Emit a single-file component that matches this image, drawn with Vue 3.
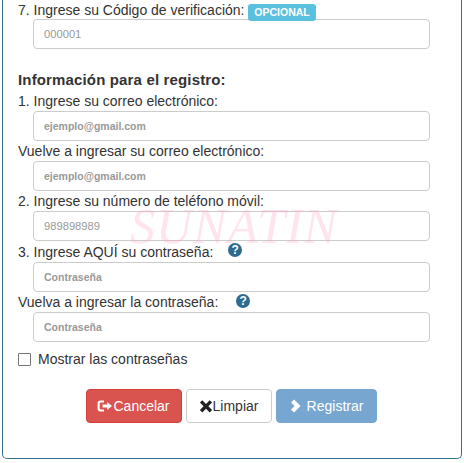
<script setup>
const groups = [
  { label: '1. Ingrese su correo electrónico:', placeholder: 'ejemplo@gmail.com', strong: true },
  { label: 'Vuelve a ingresar su correo electrónico:', placeholder: 'ejemplo@gmail.com', strong: true },
  { label: '2. Ingrese su número de teléfono móvil:', placeholder: '989898989' },
  { label: '3. Ingrese AQUÍ su contraseña:', placeholder: 'Contraseña', strong: true, help: true, mod: 'pass-a' },
  { label: 'Vuelva a ingresar la contraseña:', placeholder: 'Contraseña', strong: true, help: true, mod: 'pass-b' }
]
</script>

<template>
  <div class="panel">
    <div class="watermark">SUNATIN</div>
    <div class="group first">
      <div class="label">7. Ingrese su Código de verificación: <span class="badge">OPCIONAL</span></div>
      <input class="field" placeholder="000001" />
    </div>
    <h4 class="heading">Información para el registro:</h4>
    <div v-for="g in groups" :key="g.label" class="group" :class="g.mod">
      <div class="label">
        {{ g.label }}
        <span v-if="g.help" class="help">?</span>
      </div>
      <input class="field" :class="{ strong: g.strong }" :placeholder="g.placeholder" />
    </div>
    <label class="check">
      <span class="box"></span>
      <span>Mostrar las contraseñas</span>
    </label>
    <div class="actions">
      <button class="btn danger">
        <svg class="ico wide" viewBox="0 0 16 14" width="16" height="14">
          <path fill="#fff" d="M7 1.5H3.4C1.8 1.5.6 2.7.6 4.2v5.6c0 1.5 1.2 2.7 2.8 2.7H7v-2.1H3.6c-.5 0-.9-.4-.9-.9V4.5c0-.5.4-.9.9-.9H7z" />
          <path fill="#fff" d="M5.6 5.6h4.6V3L15 7l-4.8 4V8.4H5.6z" />
        </svg>Cancelar
      </button>
      <button class="btn plain">
        <svg class="ico" viewBox="0 0 14 14" width="14" height="14">
          <path fill="#222" d="M3.3 1.2 7 4.9l3.7-3.7 2.4 2.4L9.4 7.3l3.7 3.7-2.4 2.4L7 9.7l-3.7 3.7L.9 11l3.7-3.7L.9 3.6z" />
        </svg>Limpiar
      </button>
      <button class="btn primary">
        <svg class="ico chev" viewBox="0 0 14 14" width="14" height="14">
          <path fill="#fff" d="M5 .4 11.6 7 5 13.6 2 10.6 5.6 7 2 3.4z" />
        </svg>Registrar
      </button>
    </div>
  </div>
</template>

<style scoped>
.panel {
  position: relative;
  box-sizing: border-box;
  width: 460px;
  height: 459px;
  margin-left: 2px;
  padding: 0 31px 0 15px;
  border: 1px solid #31708f;
  border-top: none;
  border-radius: 0 0 5px 5px;
  background: #fff;
  font-family: "Liberation Sans", Arial, sans-serif;
  font-size: 14px;
  color: #333;
}
.group {
  display: flow-root;
}
.label {
  height: 20px;
  line-height: 20px;
  white-space: nowrap;
}
.first .label {
  height: 19px;
}
.pass-a {
  padding-top: 1px;
}
.badge {
  display: inline-block;
  padding: 0 6px;
  height: 17px;
  line-height: 17px;
  border-radius: 3px;
  background: #5bc0de;
  color: #fff;
  font-size: 10.5px;
  font-weight: 700;
  vertical-align: -1px;
}
.field {
  display: block;
  box-sizing: border-box;
  width: 397px;
  height: 30px;
  margin-left: 15px;
  padding: 0 10px;
  border: 1px solid #ccc;
  border-radius: 4px;
  background: transparent;
  font-family: inherit;
  font-size: 11.2px;
  outline: none;
}
.field::placeholder {
  color: #999;
  opacity: 1;
}
.field.strong::placeholder {
  font-weight: 700;
  font-size: 10.5px;
}
.heading {
  margin: 0;
  padding-top: 20px;
  height: 22px;
  line-height: 21px;
  font-size: 15px;
  font-weight: 700;
  letter-spacing: 0.15px;
  color: #333;
}
.help {
  display: inline-block;
  width: 14px;
  height: 14px;
  line-height: 14px;
  border-radius: 50%;
  background: #2e6b8f;
  color: #fff;
  font-size: 12px;
  font-weight: 700;
  text-align: center;
}
.pass-a .help {
  margin-left: 11px;
  vertical-align: 3px;
}
.pass-b .help {
  margin-left: 14px;
  vertical-align: 2px;
}
.check {
  display: flex;
  align-items: center;
  gap: 7px;
  margin-top: 7px;
  height: 20px;
}
.box {
  box-sizing: border-box;
  width: 13px;
  height: 13px;
  border: 1px solid #767676;
  border-radius: 1px;
  background: #fff;
}
.actions {
  display: flex;
  justify-content: center;
  gap: 4px;
  margin-top: 20px;
  margin-left: -1px;
  width: 428px;
}
.btn {
  display: inline-flex;
  align-items: center;
  justify-content: center;
  box-sizing: border-box;
  height: 34px;
  padding: 0;
  border: 1px solid transparent;
  border-radius: 4px;
  font-family: inherit;
  font-size: 14px;
}
.danger {
  width: 96px;
  background: #d9534f;
  border-color: #d43f3a;
  color: #fff;
}
.plain {
  width: 86px;
  background: #fff;
  border-color: #ccc;
  color: #333;
}
.primary {
  width: 101px;
  background: #77a7d1;
  border-color: #77a7d1;
  color: #fff;
}
.chev {
  margin-right: 4px;
}
.watermark {
  position: absolute;
  left: 127px;
  top: 197px;
  font-family: "Liberation Serif", serif;
  font-style: italic;
  font-size: 50px;
  letter-spacing: 1px;
  color: rgba(255, 150, 195, 0.27);
  white-space: nowrap;
  pointer-events: none;
}
</style>
